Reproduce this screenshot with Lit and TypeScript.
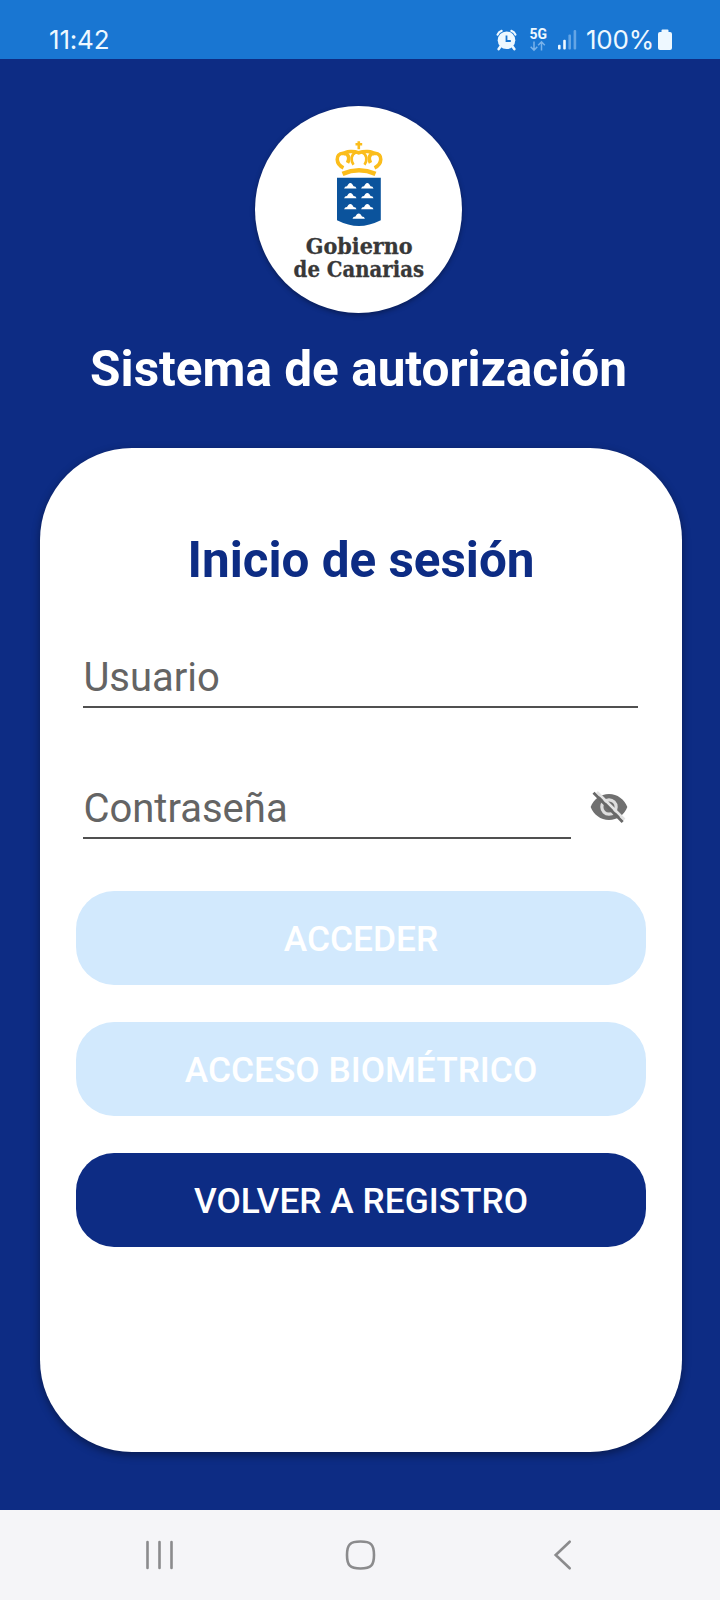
import { LitElement, html, css, svg } from "lit";
import { customElement, property } from "lit/decorators.js";

@customElement("status-bar")
class StatusBar extends LitElement {
  static styles = css`
    :host { display: flex; box-sizing: border-box; height: 59px; padding: 20px 48px 0 49px; background: #1976d2; color: #eef8ff; align-items: center; font-family: Inter, sans-serif; font-size: 26px; line-height: 38px; }
    .time { letter-spacing: -0.2px; width: 80px; }
    .grow { flex: 1; }
    .icons { display: block; flex: none; }
    .pct { letter-spacing: -0.2px; width: 72px; text-align: right; white-space: nowrap; }
    .g { font: 700 14px Roboto, sans-serif; }
    .batt { flex: none; margin-left: 4px; }
  `;
  render() {
    return html`
      <span class="time">11:42</span><span class="grow"></span>
      <svg class="icons" width="86" height="34" viewBox="496 23 86 34" fill="#eef8ff">
        <circle cx="506.5" cy="40.3" r="8.8" />
        <path d="M500.5 46.5l-1.8 2.6M512.5 46.5l1.8 2.6" stroke="#eef8ff" stroke-width="2.6" stroke-linecap="round" />
        <path d="M497.6 34.6q1-2.8 4-3.7M515.4 34.6q-1-2.8-4-3.7" fill="none" stroke="#eef8ff" stroke-width="2.2" stroke-linecap="round" />
        <path d="M506.5 35.5v5.5h4.3" fill="none" stroke="#1976d2" stroke-width="1.8" />
        <text class="g" x="529.5" y="39.2" textLength="17.5" lengthAdjust="spacingAndGlyphs">5G</text>
        <path d="M534 41.5v8.5M530.7 46.8l3.3 3.4 3.3-3.4M541.5 50.5v-8.5M538.2 45.2l3.3-3.4 3.3 3.4" fill="none" stroke="#79b2ea" stroke-width="1.5" />
        <rect x="558" y="44.8" width="2.6" height="4.7" rx="1" />
        <rect x="563.2" y="39.8" width="2.6" height="9.7" rx="1" />
        <rect x="568.4" y="34.6" width="2.6" height="14.9" rx="1" fill="#64a5e5" />
        <rect x="573.6" y="30" width="2.6" height="19.5" rx="1" fill="#64a5e5" />
      </svg>
      <span class="pct">100%</span>
      <svg class="batt" width="14" height="22" viewBox="0 0 14 22"><path d="M4.5 0.5h5q1 0 1 1v1.5h1.5q2 0 2 2v14q0 2-2 2h-10q-2 0-2-2v-14q0-2 2-2h1.5v-1.5q0-1 1-1z" fill="#eef8ff" /></svg>
    `;
  }
}

@customElement("brand-logo")
class BrandLogo extends LitElement {
  static styles = css`
    :host { display: block; width: 207px; height: 207px; border-radius: 50%; background: #fff; box-shadow: 0 2px 5px rgba(0, 0, 0, 0.35); }
    .art { display: block; }
    .word { font: 700 21.5px "DejaVu Serif", serif; fill: #383838; stroke: #383838; stroke-width: 0.3; }
  `;
  render() {
    // Each islet is a small stepped peak centred on x with its base at y.
    const islet = (x: number, y: number) => svg`<path transform="translate(${x} ${y})" d="M-6.2 0L-5.2-1.8L-3.3-2.2L-2-4.3Q0-6.5 2-4.3L3.3-2.2L5.2-1.8L6.2 0Z" fill="#fff" />`;
    return html`
      <svg class="art" width="207" height="207" viewBox="255 105.7 207 207">
        <g fill="none" stroke="#fbbd1b" stroke-width="3.6">
          <path d="M342.5 173.5Q359 166.5 375.5 173.5" stroke-width="4.6" />
          <path d="M343.5 167.5C335.5 164 335 153.5 343 153C349 153 350 158 347.5 162.5" />
          <path d="M374.5 167.5C382.5 164 383 153.5 375 153C369 153 368 158 370.5 162.5" />
          <path d="M343 154C346 150.5 354 150.5 358.8 152.5C364 150.5 372 150.5 375 154" />
          <path d="M353.5 164.5C350.5 160 351 154 356 152M364.5 164.5C367.5 160 367 154 362 152" stroke-width="2.6" />
          <path d="M358.8 141V149M355.5 144H362.2" stroke-width="2.6" />
        </g>
        <path d="M337 177.5H380.8V220Q369 225.8 358.9 225.8Q348.5 225.8 337 220Z" fill="#0b539c" />
        ${[[350.3, 188.2], [367.3, 188.2], [350.3, 198], [367.3, 198], [350.3, 209], [367.3, 209], [358.7, 218.5]].map(([x, y]) => islet(x, y))}
        <text class="word" x="305.7" y="253.8" textLength="107" lengthAdjust="spacingAndGlyphs">Gobierno</text>
        <text class="word" x="293.6" y="276.6" textLength="130.5" lengthAdjust="spacingAndGlyphs">de Canarias</text>
      </svg>
    `;
  }
}

@customElement("login-field")
class LoginField extends LitElement {
  @property() label = "";
  @property() type = "text";
  static styles = css`
    :host { display: block; box-sizing: border-box; height: 57px; border-bottom: 2px solid #505050; }
    .input { display: block; box-sizing: border-box; width: 100%; height: 54px; border: 0; padding: 0; margin: 0; outline: 0; background: none; font: 400 40px/54px Roboto, sans-serif; color: #333; }
    .input::placeholder { color: #646464; opacity: 1; }
  `;
  render() {
    return html`<input class="input" type=${this.type} placeholder=${this.label} />`;
  }
}

@customElement("nav-bar")
class NavBar extends LitElement {
  static styles = css`
    :host { display: flex; height: 90px; box-sizing: border-box; padding: 0 58px 0 59px; background: #f5f5f8; align-items: center; justify-content: space-between; }
    .key { display: block; width: 201px; height: 32px; fill: none; stroke: #8b8b8d; stroke-width: 2.6; stroke-linecap: round; }
  `;
  render() {
    return html`
      <svg class="key" viewBox="-100.5 -16 201 32"><path d="M-12-13V13M0-13V13M12-13V13" /></svg>
      <svg class="key" viewBox="-100.5 -16 201 32"><path d="M0-13.5C10.5-13.5 13.5-10.5 13.5 0S10.5 13.5 0 13.5S-13.5 10.5-13.5 0S-10.5-13.5 0-13.5Z" /></svg>
      <svg class="key" viewBox="-100.5 -16 201 32"><path d="M8.2-13.3L-5.8 0L8.2 13.3" /></svg>
    `;
  }
}

@customElement("app-root")
class AppRoot extends LitElement {
  static styles = css`
    :host { display: flex; flex-direction: column; width: 720px; height: 1600px; background: #0d2c84; font-family: Roboto, sans-serif; }
    .main { flex: 1; display: flex; flex-direction: column; align-items: center; padding: 46.7px 43px 0 40px; }
    .title { margin: 26px 0 0; font-size: 49.5px; line-height: 60px; font-weight: 700; color: #fff; white-space: nowrap; }
    .card { align-self: flex-start; box-sizing: border-box; width: 641.7px; height: 1004.6px; margin-top: 48.9px; padding: 82.2px 35.7px 0 36px; border-radius: 92px; background: #fff; box-shadow: 0 3px 9px rgba(0, 0, 0, 0.4); }
    .heading { margin: 0; font-size: 49.4px; line-height: 60px; font-weight: 700; color: #0d2c84; text-align: center; white-space: nowrap; }
    .fields { padding: 61.2px 7.6px 0 7.4px; }
    .row { display: flex; margin-top: 74.3px; }
    .pass { width: 487.5px; }
    .eye { display: block; margin: 4.5px 0 0 18.2px; }
    .actions { display: flex; flex-direction: column; gap: 37.3px; margin-top: 51.5px; }
    .btn { box-sizing: border-box; height: 94px; border: 0; border-radius: 38px; padding: 3px 0 0; background: #d2e9fd; color: #fff; font: 500 35.3px/91px Roboto, sans-serif; text-transform: uppercase; }
    .solid { background: #0d2c84; }
  `;
  render() {
    return html`
      <status-bar></status-bar>
      <div class="main">
        <brand-logo></brand-logo>
        <h1 class="title">Sistema de autorización</h1>
        <section class="card">
          <h2 class="heading">Inicio de sesión</h2>
          <div class="fields">
            <login-field label="Usuario"></login-field>
            <div class="row">
              <login-field class="pass" label="Contraseña" type="password"></login-field>
              <svg class="eye" width="40" height="40" viewBox="0 0 24 24">
                <path d="M12 4.2C7 4.2 2.73 7.4 1 12c1.73 4.6 6 7.8 11 7.8s9.27-3.2 11-7.8c-1.73-4.6-6-7.8-11-7.8z" fill="#707070" />
                <circle cx="12" cy="12" r="4.3" fill="#707070" stroke="#dedede" stroke-width="1.9" />
                <path d="M4.8 3L21.3 19.5" stroke="#e4e4e4" stroke-width="1.5" />
                <path d="M2.7 3.5L20.2 21" stroke="#686868" stroke-width="1.7" />
              </svg>
            </div>
          </div>
          <div class="actions">
            <button class="btn">Acceder</button>
            <button class="btn">Acceso biométrico</button>
            <button class="btn solid">Volver a registro</button>
          </div>
        </section>
      </div>
      <nav-bar></nav-bar>
    `;
  }
}
